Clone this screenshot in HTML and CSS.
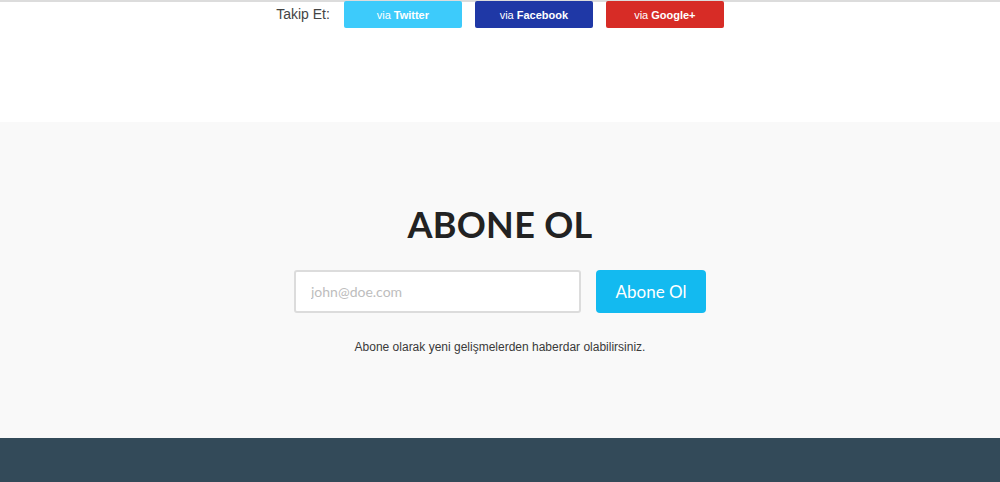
FILE: index.html
```html
<!DOCTYPE html>
<html lang="tr">
<head>
<meta charset="utf-8">
<title>Abone Ol</title>
<link rel="stylesheet" href="styles.css">
</head>
<body>
<div class="topline"></div>
<section class="follow">
  <div class="follow-row">
    <span class="follow-label">Takip Et:</span>
    <a class="social twitter" href="#">via <b>Twitter</b></a>
    <a class="social facebook" href="#">via <b>Facebook</b></a>
    <a class="social google" href="#">via <b>Google+</b></a>
  </div>
</section>
<section class="subscribe">
  <h2 class="sub-title">ABONE OL</h2>
  <form class="sub-form">
    <input class="sub-input" type="email" placeholder="john@doe.com">
    <button class="sub-btn" type="button">Abone Ol</button>
  </form>
  <p class="sub-note">Abone olarak yeni gelişmelerden haberdar olabilirsiniz.</p>
</section>
<footer class="footer"></footer>
</body>
</html>
```

FILE: styles.css
```css
html, body {
  margin: 0;
  padding: 0;
}
body {
  font-family: "Liberation Sans", Arial, sans-serif;
  background: #fff;
}
.topline {
  height: 2px;
  background: #dcdcdc;
}
.follow {
  height: 120px;
  background: #fff;
}
.follow-row {
  display: flex;
  justify-content: center;
  align-items: center;
  gap: 13px;
}
.follow-label {
  font-size: 14px;
  color: #444;
  margin-right: 1px;
  margin-top: -3px;
}
.social {
  display: flex;
  align-items: center;
  justify-content: center;
  width: 118px;
  height: 27px;
  border-radius: 2px;
  color: #fff;
  font-size: 11px;
  text-decoration: none;
  margin-top: -1px;
}
.social b {
  margin-left: 3px;
  font-weight: 700;
}
.twitter { background: #3dcbfb; }
.facebook { background: #1f38a6; }
.google { background: #d72c26; }

.subscribe {
  background: #f9f9f9;
  height: 316px;
  display: flex;
  flex-direction: column;
  align-items: center;
}
.sub-title {
  margin: 79px 0 0;
  font-family: "Lato", sans-serif;
  font-weight: 700;
  font-size: 36px;
  letter-spacing: 0.3px;
  line-height: 46px;
  color: #222;
}
.sub-form {
  display: flex;
  gap: 15px;
  margin-top: 23px;
}
.sub-input {
  width: 287px;
  height: 43px;
  box-sizing: border-box;
  border: 2px solid #dcdcdc;
  border-radius: 3px;
  background: #fff;
  padding: 0 15px;
  font-family: "Lato", sans-serif;
  font-size: 14px;
  color: #333;
  outline: none;
}
.sub-input::placeholder {
  color: #bdbdbd;
}
.sub-btn {
  width: 110px;
  height: 43px;
  border: none;
  border-radius: 4px;
  background: #13baf0;
  color: #fff;
  font-family: "Lato", sans-serif;
  font-size: 17px;
  cursor: pointer;
}
.sub-note {
  margin: 27px 0 0;
  font-size: 12px;
  color: #3a3a3a;
}
.footer {
  height: 44px;
  background: #334a59;
}
```
